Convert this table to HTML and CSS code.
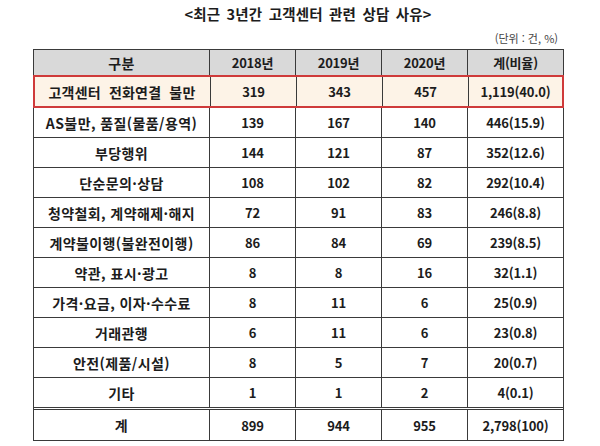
FILE: index.html
```html
<!DOCTYPE html>
<html lang="ko">
<head>
<meta charset="utf-8">
<link rel="stylesheet" href="styles.css">
</head>
<body>
<div class="page">
  <h1 class="title">&lt;최근 3년간 고객센터 관련 상담 사유&gt;</h1>
  <div class="unit">(단위 : 건, %)</div>
  <div class="table">
    <div class="row head">
      <div class="cell label">구분</div><div class="cell">2018년</div><div class="cell">2019년</div><div class="cell">2020년</div><div class="cell">계(비율)</div>
    </div>
    <div class="row hl">
      <div class="cell label wide">고객센터 전화연결 불만</div><div class="cell">319</div><div class="cell">343</div><div class="cell">457</div><div class="cell">1,119(40.0)</div>
    </div>
    <div class="row">
      <div class="cell label">AS불만, 품질(물품/용역)</div><div class="cell">139</div><div class="cell">167</div><div class="cell">140</div><div class="cell">446(15.9)</div>
    </div>
    <div class="row">
      <div class="cell label">부당행위</div><div class="cell">144</div><div class="cell">121</div><div class="cell">87</div><div class="cell">352(12.6)</div>
    </div>
    <div class="row">
      <div class="cell label">단순문의·상담</div><div class="cell">108</div><div class="cell">102</div><div class="cell">82</div><div class="cell">292(10.4)</div>
    </div>
    <div class="row">
      <div class="cell label">청약철회, 계약해제·해지</div><div class="cell">72</div><div class="cell">91</div><div class="cell">83</div><div class="cell">246(8.8)</div>
    </div>
    <div class="row">
      <div class="cell label">계약불이행(불완전이행)</div><div class="cell">86</div><div class="cell">84</div><div class="cell">69</div><div class="cell">239(8.5)</div>
    </div>
    <div class="row">
      <div class="cell label">약관, 표시·광고</div><div class="cell">8</div><div class="cell">8</div><div class="cell">16</div><div class="cell">32(1.1)</div>
    </div>
    <div class="row">
      <div class="cell label">가격·요금, 이자·수수료</div><div class="cell">8</div><div class="cell">11</div><div class="cell">6</div><div class="cell">25(0.9)</div>
    </div>
    <div class="row">
      <div class="cell label">거래관행</div><div class="cell">6</div><div class="cell">11</div><div class="cell">6</div><div class="cell">23(0.8)</div>
    </div>
    <div class="row">
      <div class="cell label">안전(제품/시설)</div><div class="cell">8</div><div class="cell">5</div><div class="cell">7</div><div class="cell">20(0.7)</div>
    </div>
    <div class="row pre-total">
      <div class="cell label">기타</div><div class="cell">1</div><div class="cell">1</div><div class="cell">2</div><div class="cell">4(0.1)</div>
    </div>
    <div class="row total">
      <div class="cell label">계</div><div class="cell">899</div><div class="cell">944</div><div class="cell">955</div><div class="cell">2,798(100)</div>
    </div>
  </div>
</div>
</body>
</html>
```

FILE: styles.css
```css
* { box-sizing: border-box; }
html, body { margin: 0; padding: 0; background: #ffffff; }
body {
  font-family: "Noto Sans CJK KR", "Noto Sans", sans-serif;
  color: #1c1c1c;
}
.page {
  width: 600px;
  height: 446px;
  padding-top: 3px;
}
.title {
  margin: 0;
  padding-left: 16px;
  font-size: 14.5px;
  font-weight: 700;
  line-height: 22px;
  text-align: center;
  letter-spacing: 0.2px;
  word-spacing: 2px;
}
.unit {
  margin-top: 5px;
  padding-right: 42px;
  text-align: right;
  font-size: 11px;
  line-height: 16px;
  color: #444;
}
.table {
  margin: 3px 0 0 33px;
  width: 531px;
  border: 1px solid #3a3a3a;
}
.row {
  display: grid;
  grid-template-columns: 176px 86px 86px 86px 1fr;
  height: 30px;
  border-bottom: 1px solid #3a3a3a;
  font-size: 13px;
  font-weight: 700;
  letter-spacing: -0.2px;
}
.cell {
  display: flex;
  align-items: center;
  justify-content: center;
  border-right: 1px solid #3a3a3a;
  white-space: pre;
}
.cell:last-child { border-right: none; }
.label {
  font-size: 14px;
  letter-spacing: 0.4px;
}
.label.wide {
  letter-spacing: 0.2px;
  word-spacing: 4px;
}
.head {
  height: 25px;
  background: #d9d9d9;
  border-bottom: none;
}
.hl {
  height: 33px;
  margin: 0 -1px;
  background: #fdf3e7;
  border: 2px solid #cf3a3a;
}
.hl .cell:first-child { margin-left: -1px; }
.pre-total {
  height: 32px;
  border-bottom: 3px double #3a3a3a;
}
.total {
  border-bottom: none;
}
```
